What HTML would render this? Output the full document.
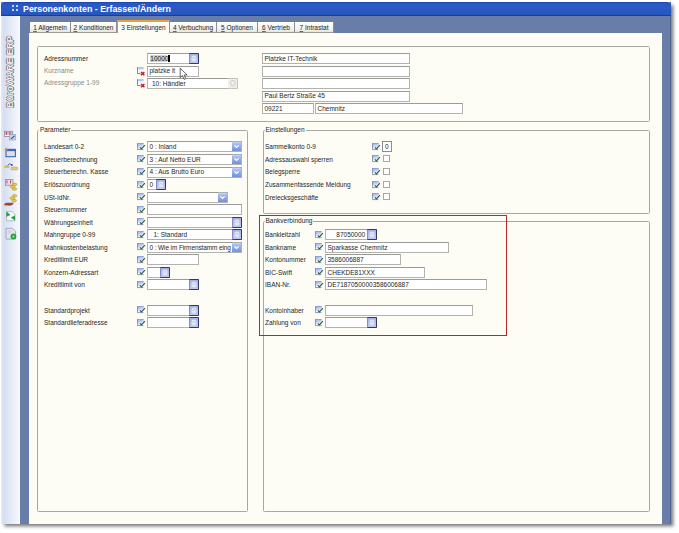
<!DOCTYPE html><html><head><meta charset="utf-8"><style>
*{margin:0;padding:0;box-sizing:border-box}
html,body{width:679px;height:533px;overflow:hidden;background:#fff;position:relative;font-family:"Liberation Sans",sans-serif;}
div,span,svg{position:absolute}
svg{overflow:visible}
.win{left:1px;top:1.5px;width:669.5px;height:522.2px;background:#687ea8;border-right:1px solid #50648e;box-shadow:2.5px 2.5px 3.5px rgba(0,0,0,.55)}
.title{left:1px;top:1.5px;width:669.5px;height:14.5px;background:linear-gradient(#2a56c2,#2c5ac6 40%,#2754bc);border-radius:5px 5px 0 0;border-top:1px solid #1d48b0;border-bottom:1px solid #1b3c98}
.side{left:1px;top:16px;width:19px;height:507.7px;background:linear-gradient(90deg,#e6eaf6,#d6def2 15%,#e6ebf8 55%,#f8f9fd)}
.panel{left:29px;top:32.5px;width:632.5px;height:491.2px;background:#fdfdf6}
.gb{border:1px solid #a8a8a2;border-radius:1.5px}
.t{font-size:6.5px;line-height:0;color:#262626;white-space:nowrap}
.fld{background:#fff;border:1px solid #b2b2ae;border-top-color:#9a9a98;font-size:6.5px;line-height:0;color:#1e1e1e;white-space:nowrap}
.btn{right:-1px;top:-1px}
.fld span{line-height:0}
.tab{top:22px;height:10.5px;background:linear-gradient(#fdfdfd,#f2f2ee 70%,#e6e6e0);border-right:1px solid #8a8f96;border-bottom:1px solid #9a9a96;font-size:6.5px;line-height:11.5px;color:#222;white-space:nowrap;text-align:center}
.tab u{text-decoration:underline;text-underline-offset:0.6px;text-decoration-thickness:0.35px;text-decoration-color:#666}
.tab.act{top:20.3px;height:12.7px;background:#fdfdf6;border-top:2px solid #e8a040;border-left:1px solid #a0a0a0;border-right:1px solid #8a8f96;border-bottom:none;line-height:11px}
.red{border:1.4px solid #b42828}
.lab{background:#fdfdf6;padding:0 1px;height:7px;line-height:7px}
</style></head><body>
<svg width="0" height="0" style="position:absolute"><defs>
<linearGradient id="gchk" x1="0" y1="0" x2="0.3" y2="1"><stop offset="0" stop-color="#98a4ec"/><stop offset="0.5" stop-color="#c4d0f4"/><stop offset="0.75" stop-color="#eef4f6"/><stop offset="1" stop-color="#f4f8f6"/></linearGradient>
<linearGradient id="gdd" x1="0" y1="0" x2="0" y2="1"><stop offset="0" stop-color="#b8c8f4"/><stop offset="1" stop-color="#7090dc"/></linearGradient>
<symbol id="chk" viewBox="0 0 9 9"><rect x="0" y="0" width="6.8" height="7" fill="url(#gchk)"/><path d="M0.4 0.4H6.6" stroke="#8a96d4" stroke-width="0.8"/><path d="M0.4 0.4V6.6H6.4" fill="none" stroke="#76809a" stroke-width="0.8"/><path d="M2.9 4.3L4.4 5.9L7.9 2.1" fill="none" stroke="#2c6248" stroke-width="1.2"/></symbol>
<symbol id="del" viewBox="0 0 9 9"><rect x="0" y="0" width="6.6" height="7" fill="#f4f8fc"/><rect x="0" y="0" width="6.6" height="2.2" fill="#b4c8e8"/><path d="M0.4 0.4V6.6H3.5" fill="none" stroke="#5c6470" stroke-width="0.8"/><path d="M4 4.9L7.4 8.2M7.4 4.9L4 8.2" stroke="#d01020" stroke-width="1.4"/></symbol>
<linearGradient id="gpk" x1="0" y1="0" x2="0" y2="1"><stop offset="0" stop-color="#a4acea"/><stop offset="1" stop-color="#c4ccf2"/></linearGradient>
<symbol id="dd" viewBox="0 0 10 11"><rect x="0" y="1" width="9" height="9" fill="url(#gdd)"/><path d="M0 1H9" stroke="#dce6fc" stroke-width="0.6"/><path d="M2.4 4.4L4.5 6.5L6.6 4.4" fill="none" stroke="#fff" stroke-width="1.2"/></symbol>
<symbol id="pk" viewBox="0 0 10 11"><rect x="0" y="0" width="10" height="11" fill="url(#gpk)"/><path d="M0.3 0.5H9.5V10.5H0.3" fill="none" stroke="#323a62" stroke-width="1"/><path d="M0.5 1V10" stroke="#7880b8" stroke-width="0.8"/><rect x="2.6" y="2.4" width="4.8" height="6" rx="2" fill="#dce8f6"/><path d="M3.6 5.6L5 4.2L6.4 5.6" fill="none" stroke="#a8b8d8" stroke-width="0.7"/></symbol>
<symbol id="pkg" viewBox="0 0 10 11"><rect x="0" y="0" width="10" height="11" fill="#eeeeea"/><path d="M0 0.5H9.5V10.5H0" fill="none" stroke="#c4c4bc" stroke-width="1"/><ellipse cx="4.8" cy="5.2" rx="2.3" ry="2.8" fill="none" stroke="#c8c8c0" stroke-width="0.8"/></symbol>
</defs></svg>
<div class="win"></div>
<div class="title"></div>
<div class="t" style="left:23px;top:8.73px;font-weight:bold;color:#fff;font-size:8.85px">Personenkonten - Erfassen/Ändern</div>
<div style="left:11.8px;top:5.3px;width:1.9px;height:2.2px;background:#c4d8f4"></div>
<div style="left:11.8px;top:9.2px;width:1.9px;height:2.2px;background:#c4d8f4"></div>
<div style="left:15.7px;top:5.3px;width:1.9px;height:2.2px;background:#c4d8f4"></div>
<div style="left:15.7px;top:9.2px;width:1.9px;height:2.2px;background:#c4d8f4"></div>
<div class="side"></div>
<div class="panel"></div>
<div class="tab" style="left:30px;width:41px"><u>1</u> Allgemein</div>
<div class="tab" style="left:71px;width:46px"><u>2</u> Konditionen</div>
<div class="tab act" style="left:117px;width:53px">3 Einstellungen</div>
<div class="tab" style="left:170px;width:47px"><u>4</u> Verbuchung</div>
<div class="tab" style="left:217px;width:41px"><u>5</u> Optionen</div>
<div class="tab" style="left:258px;width:37px"><u>6</u> Vertrieb</div>
<div class="tab" style="left:295px;width:39px"><u>7</u> Intrastat</div>
<div class="gb" style="left:37px;top:46px;width:613px;height:76px;"></div>
<div class="gb" style="left:37px;top:130px;width:211px;height:382px;"></div>
<div class="gb" style="left:263px;top:130px;width:387px;height:84px;"></div>
<div class="gb" style="left:263px;top:221px;width:387px;height:291px;"></div>
<div class="t lab" style="left:39px;top:129.25px;margin-top:-3.5px">Parameter</div>
<div class="t lab" style="left:264.5px;top:129.25px;margin-top:-3.5px">Einstellungen</div>
<div class="t lab" style="left:264.5px;top:220.75px;margin-top:-3.5px">Bankverbindung</div>
<div class="red" style="left:259px;top:215px;width:248px;height:121px;"></div>
<div class="t" style="left:44px;top:58.95px;color:#1a1a1a">Adressnummer</div>
<div class="t" style="left:44px;top:70.95px;color:#8a8a8a">Kurzname</div>
<div class="t" style="left:44px;top:83.45px;color:#8a8a8a">Adressgruppe 1-99</div>
<div class="fld" style="left:147px;top:53px;width:52px;height:11px;">
<svg class="btn" width="10" height="11" viewBox="0 0 10 11" preserveAspectRatio="none"><use href="#pk"/></svg>
</div>
<svg style="left:137px;top:66.5px" width="9" height="9" viewBox="0 0 9 9"><use href="#del"/></svg>
<div class="fld" style="left:147px;top:65.5px;width:52px;height:11px;">
<span style="left:1.5px;top:4.85px;">platzke it</span>
</div>
<svg style="left:137px;top:79px" width="9" height="9" viewBox="0 0 9 9"><use href="#del"/></svg>
<div class="fld" style="left:147px;top:78px;width:91px;height:11px;">
<span style="left:4px;top:4.85px;">10: Händler</span>
<svg class="btn" width="10" height="11" viewBox="0 0 10 11" preserveAspectRatio="none"><use href="#pkg"/></svg>
</div>
<div class="fld" style="left:262px;top:53px;width:148px;height:11px;">
<span style="left:1.5px;top:4.85px;">Platzke IT-Technik</span>
</div>
<div class="fld" style="left:262px;top:65.5px;width:148px;height:11px;">
</div>
<div class="fld" style="left:262px;top:78px;width:148px;height:11px;">
</div>
<div class="fld" style="left:262px;top:90.5px;width:148px;height:11px;">
<span style="left:1.5px;top:4.85px;">Paul Bertz Straße 45</span>
</div>
<div class="fld" style="left:262px;top:103px;width:52px;height:11px;">
<span style="left:1.5px;top:4.85px;">09221</span>
</div>
<div class="fld" style="left:315px;top:103px;width:148px;height:11px;">
<span style="left:1.5px;top:4.85px;">Chemnitz</span>
</div>
<div class="t" style="left:44px;top:147.35px;">Landesart 0-2</div>
<svg style="left:136.8px;top:142.9px" width="9" height="9" viewBox="0 0 9 9"><use href="#chk"/></svg>
<div class="fld" style="left:147px;top:141.4px;width:95px;height:11px;">
<span style="left:1.5px;top:4.85px;">0 : Inland</span>
<svg class="btn" width="10" height="11" viewBox="0 0 10 11" preserveAspectRatio="none"><use href="#dd"/></svg>
</div>
<div class="t" style="left:44px;top:159.90px;">Steuerberechnung</div>
<svg style="left:136.8px;top:155.45000000000002px" width="9" height="9" viewBox="0 0 9 9"><use href="#chk"/></svg>
<div class="fld" style="left:147px;top:153.95000000000002px;width:95px;height:11px;">
<span style="left:1.5px;top:4.85px;">3 : Auf Netto EUR</span>
<svg class="btn" width="10" height="11" viewBox="0 0 10 11" preserveAspectRatio="none"><use href="#dd"/></svg>
</div>
<div class="t" style="left:44px;top:172.45px;">Steuerberechn. Kasse</div>
<svg style="left:136.8px;top:168.0px" width="9" height="9" viewBox="0 0 9 9"><use href="#chk"/></svg>
<div class="fld" style="left:147px;top:166.5px;width:95px;height:11px;">
<span style="left:1.5px;top:4.85px;">4 : Aus Brutto Euro</span>
<svg class="btn" width="10" height="11" viewBox="0 0 10 11" preserveAspectRatio="none"><use href="#dd"/></svg>
</div>
<div class="t" style="left:44px;top:185.00px;">Erlöszuordnung</div>
<svg style="left:136.8px;top:180.55px" width="9" height="9" viewBox="0 0 9 9"><use href="#chk"/></svg>
<div class="fld" style="left:147px;top:179.05px;width:19px;height:11px;">
<span style="left:1.5px;top:4.85px;">0</span>
<svg class="btn" width="10" height="11" viewBox="0 0 10 11" preserveAspectRatio="none"><use href="#pk"/></svg>
</div>
<div class="t" style="left:44px;top:197.55px;">USt-IdNr.</div>
<svg style="left:136.8px;top:193.10000000000002px" width="9" height="9" viewBox="0 0 9 9"><use href="#chk"/></svg>
<div class="fld" style="left:147px;top:191.60000000000002px;width:81px;height:11px;">
<svg class="btn" width="10" height="11" viewBox="0 0 10 11" preserveAspectRatio="none"><use href="#dd"/></svg>
</div>
<div class="t" style="left:44px;top:210.10px;">Steuernummer</div>
<svg style="left:136.8px;top:205.65px" width="9" height="9" viewBox="0 0 9 9"><use href="#chk"/></svg>
<div class="fld" style="left:147px;top:204.15px;width:95px;height:11px;">
</div>
<div class="t" style="left:44px;top:222.65px;">Währungseinheit</div>
<svg style="left:136.8px;top:218.20000000000002px" width="9" height="9" viewBox="0 0 9 9"><use href="#chk"/></svg>
<div class="fld" style="left:147px;top:216.70000000000002px;width:95px;height:11px;">
<svg class="btn" width="10" height="11" viewBox="0 0 10 11" preserveAspectRatio="none"><use href="#pk"/></svg>
</div>
<div class="t" style="left:44px;top:235.20px;">Mahngruppe 0-99</div>
<svg style="left:136.8px;top:230.75px" width="9" height="9" viewBox="0 0 9 9"><use href="#chk"/></svg>
<div class="fld" style="left:147px;top:229.25px;width:95px;height:11px;">
<span style="left:5.5px;top:4.85px;">1: Standard</span>
<svg class="btn" width="10" height="11" viewBox="0 0 10 11" preserveAspectRatio="none"><use href="#pk"/></svg>
</div>
<div class="t" style="left:44px;top:247.75px;">Mahnkostenbelastung</div>
<svg style="left:136.8px;top:243.3px" width="9" height="9" viewBox="0 0 9 9"><use href="#chk"/></svg>
<div class="fld" style="left:147px;top:241.8px;width:95px;height:11px;">
<span style="left:1.5px;top:4.85px;letter-spacing:-0.12px">0 : Wie im Firmenstamm eing</span>
<svg class="btn" width="10" height="11" viewBox="0 0 10 11" preserveAspectRatio="none"><use href="#dd"/></svg>
</div>
<div class="t" style="left:44px;top:260.30px;">Kreditlimit EUR</div>
<svg style="left:136.8px;top:255.85000000000002px" width="9" height="9" viewBox="0 0 9 9"><use href="#chk"/></svg>
<div class="fld" style="left:147px;top:254.35000000000002px;width:52px;height:11px;">
</div>
<div class="t" style="left:44px;top:272.85px;">Konzern-Adressart</div>
<svg style="left:136.8px;top:268.4px" width="9" height="9" viewBox="0 0 9 9"><use href="#chk"/></svg>
<div class="fld" style="left:147px;top:266.9px;width:23px;height:11px;">
<svg class="btn" width="10" height="11" viewBox="0 0 10 11" preserveAspectRatio="none"><use href="#pk"/></svg>
</div>
<div class="t" style="left:44px;top:285.40px;">Kreditlimit von</div>
<svg style="left:136.8px;top:280.95000000000005px" width="9" height="9" viewBox="0 0 9 9"><use href="#chk"/></svg>
<div class="fld" style="left:147px;top:279.45000000000005px;width:52px;height:11px;">
<svg class="btn" width="10" height="11" viewBox="0 0 10 11" preserveAspectRatio="none"><use href="#pk"/></svg>
</div>
<div class="t" style="left:44px;top:310.50px;">Standardprojekt</div>
<svg style="left:136.8px;top:306.05px" width="9" height="9" viewBox="0 0 9 9"><use href="#chk"/></svg>
<div class="fld" style="left:147px;top:304.55px;width:52px;height:11px;">
<svg class="btn" width="10" height="11" viewBox="0 0 10 11" preserveAspectRatio="none"><use href="#pk"/></svg>
</div>
<div class="t" style="left:44px;top:323.05px;">Standardlieferadresse</div>
<svg style="left:136.8px;top:318.6px" width="9" height="9" viewBox="0 0 9 9"><use href="#chk"/></svg>
<div class="fld" style="left:147px;top:317.1px;width:52px;height:11px;">
<svg class="btn" width="10" height="11" viewBox="0 0 10 11" preserveAspectRatio="none"><use href="#pk"/></svg>
</div>
<div class="t" style="left:265px;top:147.35px;">Sammelkonto 0-9</div>
<svg style="left:372px;top:142.9px" width="9" height="9" viewBox="0 0 9 9"><use href="#chk"/></svg>
<div class="fld" style="left:382px;top:141.4px;width:9.5px;height:10.5px;border-color:#8c8c8c"><span style="left:2px;top:4.15px">0</span></div>
<div class="t" style="left:265px;top:159.90px;">Adressauswahl sperren</div>
<svg style="left:372px;top:155.45000000000002px" width="9" height="9" viewBox="0 0 9 9"><use href="#chk"/></svg>
<div class="fld" style="left:382.5px;top:155.45000000000002px;width:7.5px;height:7px;border-color:#a8a8a8"></div>
<div class="t" style="left:265px;top:172.45px;">Belegsperre</div>
<svg style="left:372px;top:168.0px" width="9" height="9" viewBox="0 0 9 9"><use href="#chk"/></svg>
<div class="fld" style="left:382.5px;top:168.0px;width:7.5px;height:7px;border-color:#a8a8a8"></div>
<div class="t" style="left:265px;top:185.00px;">Zusammenfassende Meldung</div>
<svg style="left:372px;top:180.55px" width="9" height="9" viewBox="0 0 9 9"><use href="#chk"/></svg>
<div class="fld" style="left:382.5px;top:180.55px;width:7.5px;height:7px;border-color:#a8a8a8"></div>
<div class="t" style="left:265px;top:197.55px;">Dreiecksgeschäfte</div>
<svg style="left:372px;top:193.10000000000002px" width="9" height="9" viewBox="0 0 9 9"><use href="#chk"/></svg>
<div class="fld" style="left:382.5px;top:193.10000000000002px;width:7.5px;height:7px;border-color:#a8a8a8"></div>
<div class="t" style="left:265px;top:235.20px;">Bankleitzahl</div>
<svg style="left:315px;top:230.75px" width="9" height="9" viewBox="0 0 9 9"><use href="#chk"/></svg>
<div class="fld" style="left:325px;top:229.25px;width:52px;height:11px;">
<span style="left:10.3px;top:4.85px;">87050000</span>
<svg class="btn" width="10" height="11" viewBox="0 0 10 11" preserveAspectRatio="none"><use href="#pk"/></svg>
</div>
<div class="t" style="left:265px;top:247.75px;">Bankname</div>
<svg style="left:315px;top:243.3px" width="9" height="9" viewBox="0 0 9 9"><use href="#chk"/></svg>
<div class="fld" style="left:325px;top:241.8px;width:124px;height:11px;">
<span style="left:1.5px;top:4.85px;">Sparkasse Chemnitz</span>
</div>
<div class="t" style="left:265px;top:260.30px;">Kontonummer</div>
<svg style="left:315px;top:255.85000000000002px" width="9" height="9" viewBox="0 0 9 9"><use href="#chk"/></svg>
<div class="fld" style="left:325px;top:254.35000000000002px;width:76px;height:11px;">
<span style="left:1.5px;top:4.85px;">3586006887</span>
</div>
<div class="t" style="left:265px;top:272.85px;">BIC-Swift</div>
<svg style="left:315px;top:268.4px" width="9" height="9" viewBox="0 0 9 9"><use href="#chk"/></svg>
<div class="fld" style="left:325px;top:266.9px;width:100px;height:11px;">
<span style="left:1.5px;top:4.85px;">CHEKDE81XXX</span>
</div>
<div class="t" style="left:265px;top:285.40px;">IBAN-Nr.</div>
<svg style="left:315px;top:280.95000000000005px" width="9" height="9" viewBox="0 0 9 9"><use href="#chk"/></svg>
<div class="fld" style="left:325px;top:279.45000000000005px;width:162px;height:11px;">
<span style="left:1.5px;top:4.85px;">DE71870500003586006887</span>
</div>
<div class="t" style="left:265px;top:310.50px;">Kontoinhaber</div>
<svg style="left:315px;top:306.05px" width="9" height="9" viewBox="0 0 9 9"><use href="#chk"/></svg>
<div class="fld" style="left:325px;top:304.55px;width:148px;height:11px;">
</div>
<div class="t" style="left:265px;top:323.05px;">Zahlung von</div>
<svg style="left:315px;top:318.6px" width="9" height="9" viewBox="0 0 9 9"><use href="#chk"/></svg>
<div class="fld" style="left:325px;top:317.1px;width:52px;height:11px;">
<svg class="btn" width="10" height="11" viewBox="0 0 10 11" preserveAspectRatio="none"><use href="#pk"/></svg>
</div>
<div class="t" style="left:10.3px;top:72px;font-size:9.4px;font-weight:bold;color:#f4f4f6;text-shadow:0 0.7px 0 #5a5a5a,0 -0.7px 0 #7a7a7e,0.5px 0 0 #8a8a8e,-0.5px 0 0 #8a8a8e;transform:translate(-50%,0) rotate(-90deg);transform-origin:50% 0">BüroWARE ERP</div>
<svg style="left:0;top:125px" width="20" height="120" viewBox="0 125 20 120">
<rect x="4.5" y="131.3" width="8" height="5.2" fill="#f0dce4" stroke="#8a8c98" stroke-width="0.8"/>
<rect x="5.2" y="132" width="6.6" height="2.8" fill="#e8b4c4"/>
<path d="M6.4 132v2.8M9.9 132v2.8" stroke="#a84060" stroke-width="1"/>
<rect x="5.2" y="135" width="6.6" height="1" fill="#fff"/>
<rect x="9.5" y="134.4" width="6" height="5.6" fill="#c8d4e8" stroke="#8a98b0" stroke-width="0.6"/>
<path d="M11 138.8L14.4 136" stroke="#3a5088" stroke-width="1.1"/>
<rect x="6" y="149.3" width="9.4" height="7.4" fill="#dcdce4" stroke="#3658a8" stroke-width="1"/>
<rect x="6" y="149.3" width="9.4" height="1.8" fill="#3a64b8"/>
<circle cx="6.2" cy="149.2" r="1.3" fill="#f08a30"/>
<rect x="4" y="165.5" width="5.5" height="2.6" rx="0.8" fill="#d8c060"/>
<rect x="11" y="167.2" width="6.8" height="2.6" rx="0.8" fill="#e4d070" stroke="#a89040" stroke-width="0.5"/>
<path d="M7.5 165.5Q9 162.6 11.8 164.6" fill="none" stroke="#3a5aa8" stroke-width="0.9"/>
<circle cx="11.8" cy="165" r="0.9" fill="#2a4a98"/>
<rect x="5.5" y="179.6" width="7.4" height="5.6" fill="#f0dce4" stroke="#8a8c98" stroke-width="0.8"/>
<path d="M7 180.4v3M10.5 180.4v3" stroke="#b04870" stroke-width="1"/>
<g fill="#e4cc50" stroke="#a88a20" stroke-width="0.5">
<ellipse cx="14.6" cy="184.4" rx="2.2" ry="1.3"/>
<ellipse cx="12.6" cy="186.8" rx="2.4" ry="1.4"/>
<ellipse cx="14.4" cy="189" rx="2.3" ry="1.3"/>
<ellipse cx="14.6" cy="195.8" rx="2.2" ry="1.3"/>
<ellipse cx="12.4" cy="198.2" rx="2.4" ry="1.4"/>
<ellipse cx="14.2" cy="200.6" rx="2.3" ry="1.3"/>
</g>
<path d="M4 205.2Q4.2 202.2 7.5 202.8L13.8 202.8Q12.8 206 8 205.6Z" fill="#9a4a34"/>
<path d="M6.6 211.6h5.8l2.6 2.6v6.6h-8.4z" fill="#f4f6f8" stroke="#9098a8" stroke-width="0.6"/>
<path d="M6.4 211.6l4 3.4-4 1.8z" fill="#20a040"/><path d="M15 220.6l-4.2-3.2 4.2-1.8z" fill="#20a040"/>
<path d="M6 228.3h6.6l3 3v7.8h-9.6z" fill="#e4e4f0" stroke="#8c90a8" stroke-width="0.7"/>
<path d="M7.6 231h4M7.6 233h3" stroke="#b0b4c8" stroke-width="0.6"/>
<circle cx="13.4" cy="236.4" r="2.6" fill="#28b040" stroke="#108028" stroke-width="0.5"/>
<circle cx="13.4" cy="236.4" r="1" fill="#a0e0a8"/>
</svg>

<div style="left:150px;top:54.8px;width:17.4px;height:7.5px;background:#d4d4d2"></div>
<div class="t" style="left:150.3px;top:58.55px;color:#111">10000</div>
<div style="left:167.6px;top:54.8px;width:2px;height:7.6px;background:#000"></div>
<svg style="left:179px;top:67px" width="10" height="14" viewBox="0 0 10 14"><path d="M1.2 1.2V10.6L3.4 8.6L5.2 12.4L6.8 11.7L5.1 8H8.2Z" fill="#fff" stroke="#222" stroke-width="0.7" stroke-linejoin="round"/></svg>
</body></html>
